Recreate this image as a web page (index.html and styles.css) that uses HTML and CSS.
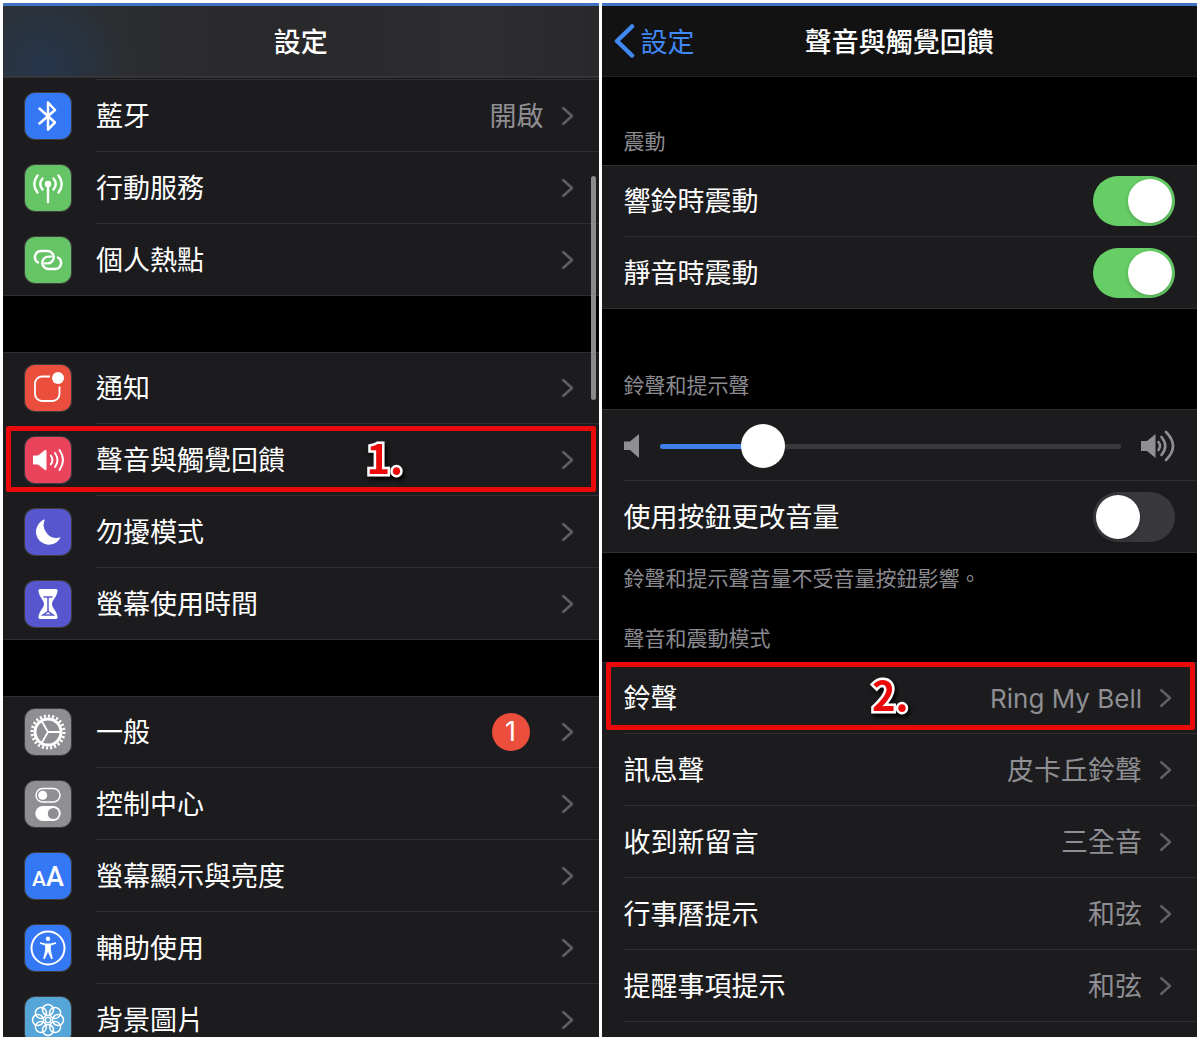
FILE: index.html
```html
<!DOCTYPE html>
<html lang="zh-Hant">
<head>
  <meta charset="UTF-8">
  <meta name="viewport" content="width=device-width, initial-scale=1">
  <title>設定</title>
  <link rel="stylesheet" href="styles.css">
</head>
<body>

<svg class="symbols" aria-hidden="true">
  <symbol id="chevron" viewBox="0 0 14 22">
    <path d="M1.500 2.500 11 11 1.500 19.500" fill="none" stroke="currentColor" stroke-width="2.600" stroke-linejoin="round"/>
  </symbol>
</svg>

<main class="phones">

  <section class="phone">
    <header class="navbar navbar-tinted">
      <h1>設定</h1>
    </header>

    <div class="group">
      <div class="row-peek"></div>
      <a class="row" href="#">
        <svg class="tile blue" viewBox="0 0 46 46"><path d="M14.500 15.500 30 29.500 23 36.500V9.500L30 17 14.500 30.500" fill="none" stroke="#fff" stroke-width="2.500" stroke-linejoin="round" stroke-linecap="round"/></svg>
        <span class="body"><span class="label">藍牙</span><span class="value">開啟</span><svg class="chevron"><use href="#chevron"/></svg></span>
      </a>
      <a class="row" href="#">
        <svg class="tile green" viewBox="0 0 46 46">
          <circle cx="23" cy="19" r="3.200" fill="#fff"/>
          <path d="M23 19V37M17.500 13.500Q13 19 17.500 24.500M28.500 13.500Q33 19 28.500 24.500M12.500 10.500Q6 19 12.500 27.500M33.500 10.500Q40 19 33.500 27.500" fill="none" stroke="#fff" stroke-width="2.400" stroke-linecap="round"/>
        </svg>
        <span class="body"><span class="label">行動服務</span><svg class="chevron"><use href="#chevron"/></svg></span>
      </a>
      <a class="row" href="#">
        <svg class="tile green" viewBox="0 0 46 46"><path d="M13 25.500A6.200 6.200 0 0 1 15.500 14H22.500A6.200 6.200 0 0 1 22.500 26.400H20M33 20.500A6.200 6.200 0 0 1 30.500 32H23.500A6.200 6.200 0 0 1 23.500 19.600H26" fill="none" stroke="#fff" stroke-width="2.400" stroke-linecap="round"/></svg>
        <span class="body"><span class="label">個人熱點</span><svg class="chevron"><use href="#chevron"/></svg></span>
      </a>
    </div>

    <div class="group group-spaced">
      <a class="row" href="#">
        <svg class="tile red" viewBox="0 0 46 46">
          <path d="M25 11.500H17a7 7 0 0 0-7 7V29a7 7 0 0 0 7 7H27.500a7 7 0 0 0 7-7V21.500" fill="none" stroke="#fff" stroke-width="1.800"/>
          <circle cx="33" cy="13" r="6" fill="#fff"/>
        </svg>
        <span class="body"><span class="label">通知</span><svg class="chevron"><use href="#chevron"/></svg></span>
      </a>
      <a class="row" href="#">
        <svg class="tile pink" viewBox="0 0 46 46">
          <path d="M9 18.500H13L20 13Q21.500 12.500 21.500 14V32Q21.500 33.500 20 33L13 27.500H9Q8 27.500 8 26.500V19.500Q8 18.500 9 18.500Z" fill="#fff"/>
          <path d="M25.800 18.500Q29 23 25.800 27.500M30 16Q35 23 30 30M34.500 13Q41.500 23 34.500 33" fill="none" stroke="#fff" stroke-width="2" stroke-linecap="round"/>
        </svg>
        <span class="body"><span class="label">聲音與觸覺回饋</span><svg class="chevron"><use href="#chevron"/></svg></span>
        <span class="marker"><b class="step">1.</b></span>
      </a>
      <a class="row" href="#">
        <svg class="tile purple" viewBox="0 0 46 46"><path d="M20 10.300A13 13 0 1 0 35.700 28.300A13 13 0 0 1 20 10.300Z" fill="#fff"/></svg>
        <span class="body"><span class="label">勿擾模式</span><svg class="chevron"><use href="#chevron"/></svg></span>
      </a>
      <a class="row" href="#">
        <svg class="tile purple" viewBox="0 0 46 46">
          <path d="M15 8H31Q33 8 32.500 10C32 16 27 19 27 23S32 30 32.500 36Q33 38 31 38H15Q13 38 13.500 36C14 30 19 27 19 23S14 16 13.500 10Q13 8 15 8Z" fill="#fff"/>
          <path d="M18.500 16H27.500M23 16V31M18 34 23 30.500 28 34Z" fill="none" stroke="#5756ce" stroke-width="1.500"/>
        </svg>
        <span class="body"><span class="label">螢幕使用時間</span><svg class="chevron"><use href="#chevron"/></svg></span>
      </a>
    </div>

    <div class="group group-spaced">
      <a class="row" href="#">
        <svg class="tile gray" viewBox="0 0 46 46">
          <g fill="none" stroke="#fff">
            <circle cx="23" cy="23" r="16" stroke-width="3" pathLength="48" stroke-dasharray="1 1"/>
            <circle cx="23" cy="23" r="13" stroke-width="3"/>
            <path d="M23 23H36M23 23 16.500 11.700M23 23 16.500 34.300" stroke-width="1.800"/>
          </g>
        </svg>
        <span class="body"><span class="label">一般</span><span class="badge">1</span><svg class="chevron"><use href="#chevron"/></svg></span>
      </a>
      <a class="row" href="#">
        <svg class="tile gray" viewBox="0 0 46 46">
          <rect x="11" y="7.500" width="24" height="13.500" rx="6.750" fill="none" stroke="#fff" stroke-width="1.500"/>
          <circle cx="17.700" cy="14.200" r="4.500" fill="#fff"/>
          <rect x="10.300" y="25" width="25.400" height="15" rx="7.500" fill="#fff"/>
          <circle cx="28.300" cy="32.500" r="5.500" fill="#8e8e93"/>
        </svg>
        <span class="body"><span class="label">控制中心</span><svg class="chevron"><use href="#chevron"/></svg></span>
      </a>
      <a class="row" href="#">
        <svg class="tile blue" viewBox="0 0 46 46">
          <text class="glyph" x="7" y="33" font-size="21">A</text>
          <text class="glyph" x="21" y="33" font-size="27">A</text>
        </svg>
        <span class="body"><span class="label">螢幕顯示與亮度</span><svg class="chevron"><use href="#chevron"/></svg></span>
      </a>
      <a class="row" href="#">
        <svg class="tile blue" viewBox="0 0 46 46">
          <circle cx="23" cy="23" r="16.500" fill="none" stroke="#fff" stroke-width="2"/>
          <circle cx="23" cy="13.800" r="2.200" fill="#fff"/>
          <path d="M15 17.200 20.500 18.500H25.500L31 17.200V18.800L25.800 20.500V25L27.800 34H26.200L23 27 19.800 34H18.200L20.200 25V20.500L15 18.800Z" fill="#fff"/>
        </svg>
        <span class="body"><span class="label">輔助使用</span><svg class="chevron"><use href="#chevron"/></svg></span>
      </a>
      <a class="row" href="#">
        <svg class="tile sky" viewBox="0 0 46 46">
          <g fill="none" stroke="#fff" stroke-width="1.500">
            <circle cx="23" cy="13" r="5.500"/><circle cx="30.100" cy="15.900" r="5.500"/>
            <circle cx="33" cy="23" r="5.500"/><circle cx="30.100" cy="30.100" r="5.500"/>
            <circle cx="23" cy="33" r="5.500"/><circle cx="15.900" cy="30.100" r="5.500"/>
            <circle cx="13" cy="23" r="5.500"/><circle cx="15.900" cy="15.900" r="5.500"/>
            <circle cx="23" cy="23" r="2.800"/>
          </g>
        </svg>
        <span class="body"><span class="label">背景圖片</span><svg class="chevron"><use href="#chevron"/></svg></span>
      </a>
    </div>

    <div class="scrollbar"></div>
  </section>

  <section class="phone">
    <header class="navbar">
      <a class="back" href="#">
        <svg viewBox="0 0 21 36"><path d="M18 3.500 3 18 18 32.500" fill="none" stroke="currentColor" stroke-width="4.500" stroke-linecap="round" stroke-linejoin="round"/></svg>
        <span class="back-text">設定</span>
      </a>
      <h1>聲音與觸覺回饋</h1>
    </header>

    <h2 class="section-title first-title">震動</h2>
    <div class="group">
      <label class="row"><span class="body"><span class="label">響鈴時震動</span><input class="switch" type="checkbox" checked></span></label>
      <label class="row"><span class="body"><span class="label">靜音時震動</span><input class="switch" type="checkbox" checked></span></label>
    </div>

    <h2 class="section-title wide-title" id="volume-title">鈴聲和提示聲</h2>
    <div class="group">
      <div class="row">
        <span class="body volume">
          <svg class="speaker-low" viewBox="0 0 16 24"><path d="M0 7.500H6L15 0V24L6 16H0Z" fill="#8e8e93"/></svg>
          <input class="slider" type="range" min="0" max="100" step="0.5" value="19.5" aria-labelledby="volume-title">
          <svg class="speaker-high" viewBox="0 0 34 32">
            <path d="M0 11H6L14.500 4V28L6 21H0Z" fill="#8e8e93"/>
            <path d="M17.500 12Q20.500 16 17.500 20M20.500 7Q28 16 20.500 25M25 2Q39 16 25 30" fill="none" stroke="#8e8e93" stroke-width="2.600" stroke-linecap="round"/>
          </svg>
        </span>
      </div>
      <label class="row"><span class="body"><span class="label">使用按鈕更改音量</span><input class="switch" type="checkbox"></span></label>
    </div>
    <p class="note">鈴聲和提示聲音量不受音量按鈕影響。</p>

    <h2 class="section-title">聲音和震動模式</h2>
    <div class="group">
      <a class="row" href="#">
        <span class="body"><span class="label">鈴聲</span><span class="value value-latin">Ring My Bell</span><svg class="chevron"><use href="#chevron"/></svg></span>
        <span class="marker marker-top"><b class="step">2.</b></span>
      </a>
      <a class="row" href="#"><span class="body"><span class="label">訊息聲</span><span class="value">皮卡丘鈴聲</span><svg class="chevron"><use href="#chevron"/></svg></span></a>
      <a class="row" href="#"><span class="body"><span class="label">收到新留言</span><span class="value">三全音</span><svg class="chevron"><use href="#chevron"/></svg></span></a>
      <a class="row" href="#"><span class="body"><span class="label">行事曆提示</span><span class="value">和弦</span><svg class="chevron"><use href="#chevron"/></svg></span></a>
      <a class="row" href="#"><span class="body"><span class="label">提醒事項提示</span><span class="value">和弦</span><svg class="chevron"><use href="#chevron"/></svg></span></a>
      <div class="row"></div>
    </div>
  </section>

</main>

</body>
</html>
```
FILE: styles.css
```css
* {
  box-sizing: border-box;
}
body {
  margin: 0;
  background: #fff;
  color: #fff;
  font-family: Inter, "Noto Sans CJK TC", sans-serif;
  font-size: 27px;
  line-height: 40px;
}
a {
  color: inherit;
  text-decoration: none;
}
h1, h2, p {
  margin: 0;
}
.symbols {
  position: absolute;
  width: 0;
  height: 0;
}
.phones {
  display: grid;
  grid-template-columns: 1fr 1fr;
  gap: 3px;
  height: 100vh;
  padding: 3px;
}
.phone {
  position: relative;
  overflow: hidden;
  background: #000;
}

/* top bar */
.navbar {
  display: grid;
  grid-template-columns: 1fr auto 1fr;
  align-items: center;
  height: 74px;
  padding: 0 12px;
  border-top: 3px solid #4173c4;
  border-bottom: 1px solid #232325;
  background: #121212;
}
.navbar-tinted {
  border-bottom-color: #38383a;
  background:
    radial-gradient(circle at 40px 60px, #26364c, rgba(38, 54, 76, 0) 90px),
    linear-gradient(90deg, #2e3032, #29292b 50%, #2e2e30 80%, #29292b);
}
.navbar h1 {
  grid-column: 2;
  font-size: 27px;
  font-weight: 500;
}
.navbar h1, .back-text, .label, .value {
  padding-top: 3px;
}
.back {
  display: flex;
  align-items: center;
  gap: 6px;
  color: #4088f2;
}
.back svg {
  width: 21px;
  height: 36px;
}

/* lists */
.group {
  background: #1c1c1e;
  box-shadow: inset 0 1px #303032, inset 0 -1px #303032;
}
.group-spaced {
  margin-top: 56px;
}
.row {
  position: relative;
  display: flex;
  align-items: center;
  height: 72px;
  padding-left: 22px;
}
.row-peek {
  height: 3px;
  margin-left: 93px;
  border-bottom: 1px solid #303032;
}
.body {
  flex: 1;
  display: flex;
  align-items: center;
  height: 72px;
  padding-right: 22px;
  border-bottom: 1px solid #303032;
}
.row:last-child .body {
  border-bottom-color: transparent;
}
.label {
  flex: 1;
}
.value {
  color: #8e8e93;
}
.value-latin {
  font-size: 26px;
}
.chevron {
  width: 14px;
  height: 22px;
  margin: 0 2px 0 17px;
  color: #5f5f63;
}
.tile {
  width: 46px;
  height: 46px;
  margin-right: 25px;
  border-radius: 10px;
  box-shadow: 0 0 0 1px rgba(255, 255, 255, 0.15);
}
.glyph {
  fill: #fff;
  font-family: Roboto, sans-serif;
  font-weight: 500;
}
.blue { background: #3478f6; }
.green { background: #65c466; }
.red { background: #eb4e3d; }
.pink { background: #e9445b; }
.purple { background: #5756ce; }
.gray { background: #8e8e93; }
.sky { background: #55a5d8; }

.badge {
  width: 38px;
  height: 38px;
  margin-right: 14px;
  border-radius: 50%;
  background: #eb4e3d;
  line-height: 38px;
  text-align: center;
}
.scrollbar {
  position: absolute;
  top: 173px;
  right: 3px;
  width: 5px;
  height: 224px;
  border-radius: 3px;
  background: #8b8b8d;
}

/* section texts */
.section-title, .note {
  padding: 0 22px;
  color: #8a8a8f;
  font-size: 21px;
  font-weight: 400;
  line-height: 30px;
}
.section-title {
  padding-top: 30px;
  padding-bottom: 8px;
}
.first-title {
  padding-top: 50px;
}
.wide-title {
  padding-top: 62px;
}
.note {
  padding-top: 11px;
}

/* controls */
.switch {
  appearance: none;
  width: 82px;
  height: 50px;
  margin: 0;
  padding: 3px;
  border-radius: 25px;
  background: #39393d;
}
.switch::before {
  content: "";
  display: block;
  width: 44px;
  height: 44px;
  border-radius: 50%;
  background: #fff;
  box-shadow: 0 2px 5px rgba(0, 0, 0, 0.2);
}
.switch:checked {
  background: #67ce67;
}
.switch:checked::before {
  margin-left: auto;
}
.volume {
  gap: 20px;
  padding-top: 3px;
}
.speaker-low {
  width: 16px;
  height: 24px;
}
.speaker-high {
  width: 34px;
  height: 32px;
}
.slider {
  appearance: none;
  flex: 1;
  min-width: 0;
  height: 5px;
  margin: 0;
  border-radius: 3px;
  background: linear-gradient(90deg, #4080e8 22%, #3a3a3d 22%);
}
.slider::-webkit-slider-thumb {
  appearance: none;
  width: 44px;
  height: 44px;
  border-radius: 50%;
  background: #fff;
}

/* step markers */
.marker {
  position: absolute;
  inset: 2px 3px 4px 3px;
  display: flex;
  align-items: center;
  justify-content: center;
  padding: 0 0 4px 168px;
  border: 5px solid #ea0a0a;
  border-radius: 2px;
}
.marker-top {
  inset: 0 2px 4px 4px;
  padding: 0 20px 4px 0;
}
.step {
  color: #ea0a0a;
  font-family: "Noto Sans CJK TC", sans-serif;
  font-size: 40px;
  -webkit-text-stroke: 5px #fff;
  paint-order: stroke fill;
  filter: drop-shadow(2px 3px 2px #000);
}
```
